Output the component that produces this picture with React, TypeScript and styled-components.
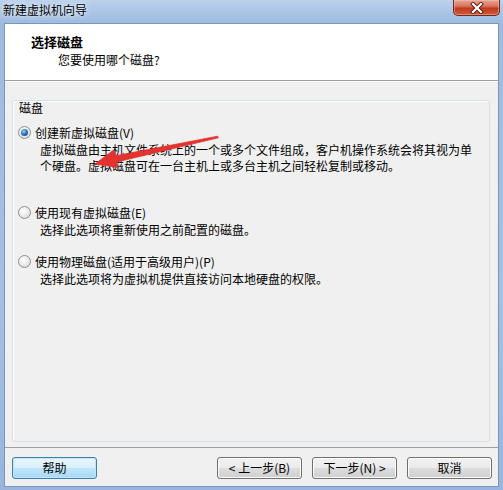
import React from "react";
import styled, { createGlobalStyle } from "styled-components";

const Global = createGlobalStyle`
  html, body { margin: 0; padding: 0; background: #ffffff; }
  body { font-family: "Noto Sans CJK SC", "Liberation Sans", sans-serif; font-size: 12px; color: #000; }
`;

const Window = styled.div`
  position: relative;
  width: 503px;
  height: 490px;
  box-sizing: border-box;
  display: flex;
  flex-direction: column;
  padding: 0 4px 3px 4px;
  background: linear-gradient(180deg, #bcd2ec 0px, #a9c3e4 14px, #9fbbe0 23px, #a4c0e4 60%, #98b6dd 100%);
  overflow: hidden;
`;

const TitleBar = styled.div`
  height: 23px;
  display: flex;
  align-items: flex-start;
  margin-left: -1px;
`;

const TitleText = styled.div`
  font-size: 12px;
  line-height: 12px;
  margin-top: 4px;
  color: #000;
  text-shadow: 0 0 6px #e8f1fb, 0 0 3px #e8f1fb;
`;

const CloseButton = styled.div`
  margin-left: auto;
  margin-right: -1px;
  width: 47px;
  height: 16px;
  box-sizing: border-box;
  border: 1px solid #6e2a1f;
  border-top: none;
  border-radius: 0 0 5px 5px;
  background: linear-gradient(180deg, #e6a595 0%, #d8775f 40%, #c13a1f 55%, #cf5a3c 100%);
  box-shadow: inset 0 0 0 1px rgba(255, 200, 180, 0.45);
  display: flex;
  align-items: center;
  justify-content: center;
`;

const Client = styled.div`
  flex: 1;
  display: flex;
  flex-direction: column;
  border: 1px solid #7a96bf;
  background: #f0f0f0;
  min-height: 0;
`;

const Header = styled.div`
  height: 57px;
  box-sizing: border-box;
  background: #ffffff;
  border-bottom: 1px solid #a0a0a0;
  padding: 10px 0 0 26px;
`;

const HeaderTitle = styled.div`
  font-size: 13px;
  font-weight: bold;
  line-height: 16px;
`;

const HeaderSubtitle = styled.div`
  font-size: 12px;
  line-height: 16px;
  margin: 2px 0 0 27px;
`;

const Body = styled.div`
  flex: 1;
  display: flex;
  flex-direction: column;
  border-top: 1px solid #ffffff;
  padding: 18px 8px 5px 7px;
  min-height: 0;
`;

const GroupBox = styled.div`
  flex: 1;
  border: 1px solid #d5dfe5;
  border-radius: 3px;
  box-shadow: inset 1px 1px 0 #ffffff;
  padding: 0 0 0 5px;
`;

const GroupLabel = styled.div`
  line-height: 14px;
  padding-left: 1px;
`;

const Option = styled.div<{ $top: number }>`
  margin-top: ${(p) => p.$top}px;
`;

const OptionRow = styled.div`
  display: flex;
  align-items: center;
  height: 16px;
  gap: 4px;
`;

const Radio = styled.span<{ $checked?: boolean }>`
  width: 13px;
  height: 13px;
  box-sizing: border-box;
  border-radius: 50%;
  border: 1px solid #8e8f8f;
  background: radial-gradient(circle at 40% 35%, #ffffff 0%, #e8e8e8 55%, #cfd2d6 100%);
  display: flex;
  align-items: center;
  justify-content: center;
  flex: none;
  &::after {
    content: "";
    display: ${(p) => (p.$checked ? "block" : "none")};
    width: 7px;
    height: 7px;
    border-radius: 50%;
    background: radial-gradient(circle at 40% 35%, #9fd3f5 0%, #2a79b8 45%, #123b63 100%);
  }
`;

const Desc = styled.div<{ $width?: number }>`
  margin: 2px 0 0 22px;
  line-height: 16px;
  width: ${(p) => (p.$width ? `${p.$width}px` : "auto")};
`;

const Footer = styled.div`
  height: 39px;
  box-sizing: border-box;
  border-top: 1px solid #a0a0a0;
  display: flex;
  align-items: flex-start;
  gap: 10px;
  padding: 9px 6px 0 7px;
`;

const Button = styled.button<{ $primary?: boolean; $push?: boolean }>`
  width: 85px;
  height: 22px;
  box-sizing: border-box;
  margin: 0;
  margin-right: ${(p) => (p.$push ? "auto" : "0")};
  padding: 0;
  font-family: "Noto Sans CJK SC", "Liberation Sans", sans-serif;
  font-size: 12px;
  line-height: 18px;
  color: #000;
  border-radius: 3px;
  border: 1px solid ${(p) => (p.$primary ? "#3c7fb1" : "#707070")};
  background: ${(p) =>
    p.$primary
      ? "linear-gradient(180deg, #eaf6fd 0%, #d9f0fc 48%, #bee6fd 52%, #a7d9f5 100%)"
      : "linear-gradient(180deg, #f2f2f2 0%, #ebebeb 48%, #dddddd 52%, #cfcfcf 100%)"};
  box-shadow: inset 0 0 0 1px ${(p) => (p.$primary ? "#c4e5f6" : "#fcfcfc")};
`;

const ArrowOverlay = styled.svg`
  position: absolute;
  left: 0;
  top: 0;
  pointer-events: none;
`;

export default function App() {
  return (
    <>
      <Global />
      <Window>
        <TitleBar>
          <TitleText>新建虚拟机向导</TitleText>
          <CloseButton>
            <svg width="14" height="12" viewBox="0 0 14 12">
              <path
                d="M3 2 L11 10 M11 2 L3 10"
                stroke="#5a1a10"
                strokeWidth="4"
                strokeLinecap="square"
              />
              <path
                d="M3 2 L11 10 M11 2 L3 10"
                stroke="#ffffff"
                strokeWidth="2.2"
                strokeLinecap="square"
              />
            </svg>
          </CloseButton>
        </TitleBar>
        <Client>
          <Header>
            <HeaderTitle>选择磁盘</HeaderTitle>
            <HeaderSubtitle>您要使用哪个磁盘?</HeaderSubtitle>
          </Header>
          <Body>
            <GroupBox>
              <GroupLabel>磁盘</GroupLabel>
              <Option $top={9}>
                <OptionRow>
                  <Radio $checked />
                  <span>创建新虚拟磁盘(V)</span>
                </OptionRow>
                <Desc $width={434}>
                  虚拟磁盘由主机文件系统上的一个或多个文件组成，客户机操作系统会将其视为单个硬盘。虚拟磁盘可在一台主机上或多台主机之间轻松复制或移动。
                </Desc>
              </Option>
              <Option $top={30}>
                <OptionRow>
                  <Radio />
                  <span>使用现有虚拟磁盘(E)</span>
                </OptionRow>
                <Desc>选择此选项将重新使用之前配置的磁盘。</Desc>
              </Option>
              <Option $top={15}>
                <OptionRow>
                  <Radio />
                  <span>使用物理磁盘(适用于高级用户)(P)</span>
                </OptionRow>
                <Desc>选择此选项将为虚拟机提供直接访问本地硬盘的权限。</Desc>
              </Option>
            </GroupBox>
          </Body>
          <Footer>
            <Button $primary $push>帮助</Button>
            <Button>&lt; 上一步(B)</Button>
            <Button>下一步(N) &gt;</Button>
            <Button>取消</Button>
          </Footer>
        </Client>
        <ArrowOverlay width="503" height="490" viewBox="0 0 503 490">
          <polygon
            points="95,164 118,167.5 116.6,162 218.3,137.8 217.7,136.2 115.4,155.8 113.6,150"
            fill="#e4322f"
            stroke="#e4322f"
            strokeWidth="0.8"
            strokeLinejoin="round"
          />
        </ArrowOverlay>
      </Window>
    </>
  );
}
